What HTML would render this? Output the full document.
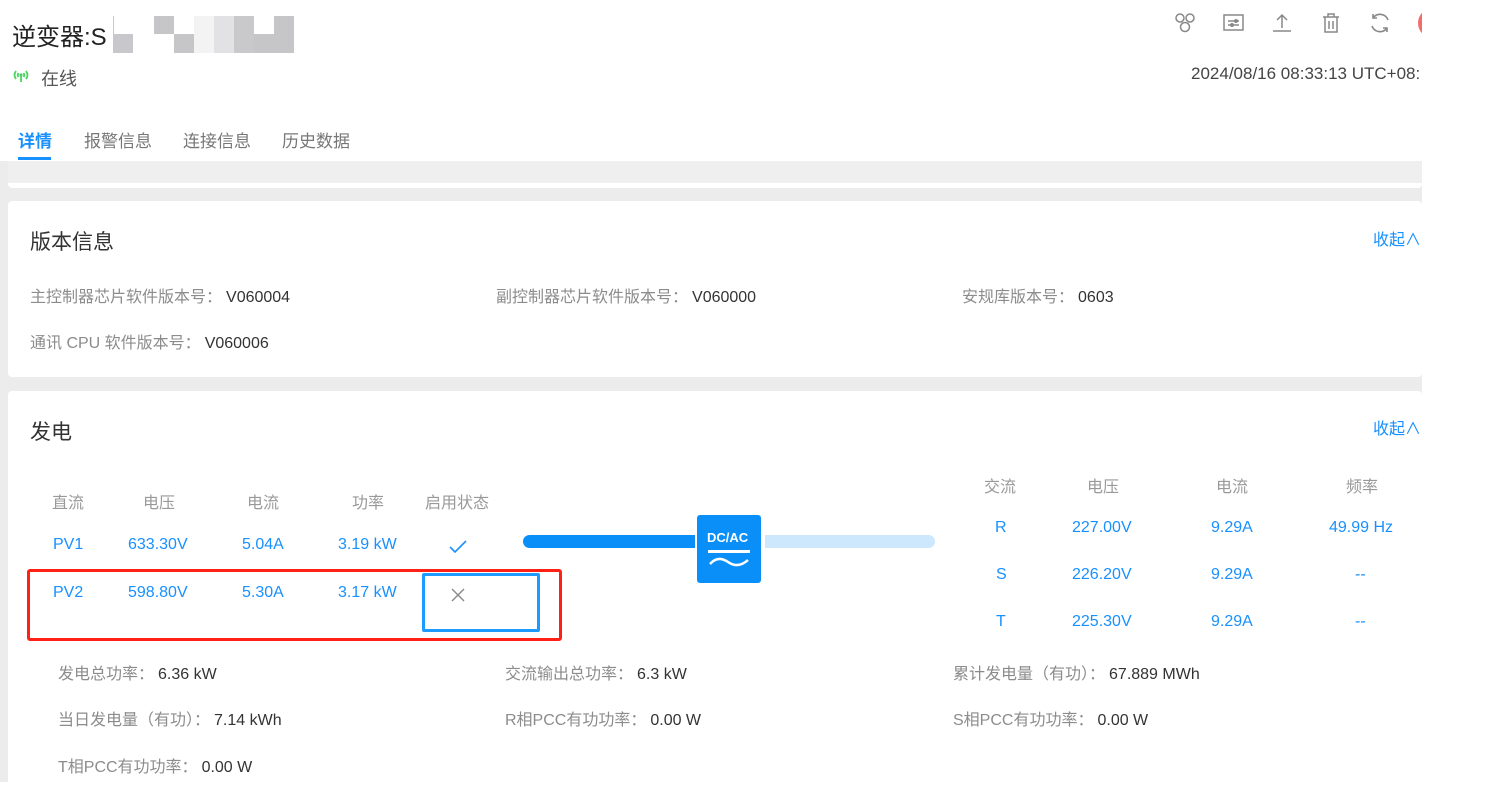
<!DOCTYPE html>
<html><head><meta charset="utf-8"><style>
*{margin:0;padding:0;box-sizing:border-box}
body{width:1487px;height:782px;overflow:hidden;background:#fff;font-family:"Liberation Sans","Noto Sans CJK SC",sans-serif;position:relative;color:#333}
.a{position:absolute;white-space:nowrap}
.lb{color:#8c8c8c;font-size:16px}
.v{color:#333;font-size:16px;margin-left:4px}
.b{color:#1890ff;font-size:16px}
.h{color:#999;font-size:16px}
</style></head><body>
<div class="a" style="left:12px;top:17px;font-size:24px;color:#222">逆变器:S</div>
<div class="a" style="left:113px;top:16px;width:20px;height:37px;background:#c8c8cc"></div>
<div class="a" style="left:114px;top:16px;width:20px;height:18px;background:#fff"></div>
<div class="a" style="left:154px;top:16px;width:20px;height:18px;background:#c6c6c9"></div>
<div class="a" style="left:174px;top:34px;width:20px;height:19px;background:#c6c6c9"></div>
<div class="a" style="left:194px;top:16px;width:20px;height:37px;background:#f3f3f3"></div>
<div class="a" style="left:214px;top:16px;width:20px;height:37px;background:#e2e2e4"></div>
<div class="a" style="left:234px;top:16px;width:20px;height:37px;background:#c9c9cc"></div>
<div class="a" style="left:254px;top:34px;width:20px;height:19px;background:#c6c6c9"></div>
<div class="a" style="left:274px;top:16px;width:20px;height:37px;background:#c6c6c9"></div>
<svg class="a" style="left:12px;top:69px" width="18" height="14" viewBox="0 0 18 14"><g fill="none" stroke="#4cd263" stroke-width="1.8"><path d="M4 2 Q1 6 4 10"/><path d="M14 2 Q17 6 14 10"/><path d="M6.5 4 Q5 6 6.5 8"/><path d="M11.5 4 Q13 6 11.5 8"/><path d="M9 6 V13"/></g><circle cx="9" cy="6" r="1.6" fill="#4cd263"/></svg>
<div class="a" style="left:41px;top:65px;font-size:18px;color:#555">在线</div>
<div class="a" style="left:1191px;top:64px;font-size:17px;color:#444">2024/08/16 08:33:13 UTC+08:</div>
<div class="a" style="left:1422px;top:0;width:65px;height:782px;background:#fff;z-index:5"></div>
<!-- icons -->
<svg class="a" style="left:1173px;top:12px" width="24" height="22" viewBox="0 0 24 22" fill="none" stroke="#888" stroke-width="1.5"><circle cx="7" cy="6" r="4"/><circle cx="17" cy="6" r="4"/><circle cx="12" cy="15" r="4.5"/></svg>
<svg class="a" style="left:1223px;top:13px" width="22" height="20" viewBox="0 0 22 20" fill="none" stroke="#888" stroke-width="1.5"><rect x="1" y="2" width="19" height="15"/><path d="M5 8h11M5 12h11"/><circle cx="13" cy="8" r="1.2"/><circle cx="9" cy="12" r="1.2"/></svg>
<svg class="a" style="left:1271px;top:12px" width="22" height="22" viewBox="0 0 22 22" fill="none" stroke="#888" stroke-width="1.5"><path d="M11 3v13M6 8l5-5 5 5M2 19h18"/></svg>
<svg class="a" style="left:1321px;top:12px" width="20" height="22" viewBox="0 0 20 22" fill="none" stroke="#888" stroke-width="1.5"><path d="M2 5h16M7 5V2h6v3M4 5v15h12V5M8 9v8M12 9v8"/></svg>
<svg class="a" style="left:1368px;top:11px" width="24" height="24" viewBox="0 0 24 24" fill="none" stroke="#888" stroke-width="1.6"><path d="M20 9A8.5 8.5 0 0 0 5 7M4 15a8.5 8.5 0 0 0 15 2"/><path d="M5 3v4h4M19 21v-4h-4"/></svg>
<div class="a" style="left:1418px;top:8px;width:30px;height:30px;border-radius:50%;background:#f56c6c;z-index:1"></div>
<!-- tabs -->
<div class="a" style="left:18px;top:127px;font-size:17px;color:#1890ff;font-weight:bold">详情</div>
<div class="a" style="left:18px;top:157px;width:33px;height:3px;background:#1890ff"></div>
<div class="a" style="left:84px;top:127px;font-size:17px;color:#777">报警信息</div>
<div class="a" style="left:183px;top:127px;font-size:17px;color:#777">连接信息</div>
<div class="a" style="left:282px;top:127px;font-size:17px;color:#777">历史数据</div>
<!-- gray area -->
<div class="a" style="left:0;top:161px;width:1422px;height:621px;background:#ececec"></div>
<div class="a" style="left:8px;top:161px;width:1414px;height:27px;background:#efefef;border-radius:0 0 4px 4px;border-bottom:5px solid #fff"></div>
<div class="a" style="left:8px;top:201px;width:1414px;height:176px;background:#fff;border-radius:4px"></div>
<div class="a" style="left:8px;top:391px;width:1414px;height:400px;background:#fff;border-radius:4px"></div>
<div class="a" style="left:30px;top:226px;font-size:21px;color:#333">版本信息</div>
<div class="a" style="left:1373px;top:226px;font-size:16px;color:#1890ff">收起∧</div>
<div class="a lb" style="left:30px;top:283px">主控制器芯片软件版本号：<span class="v">V060004</span></div>
<div class="a lb" style="left:496px;top:283px">副控制器芯片软件版本号：<span class="v">V060000</span></div>
<div class="a lb" style="left:962px;top:283px">安规库版本号：<span class="v">0603</span></div>
<div class="a lb" style="left:30px;top:329px">通讯 CPU 软件版本号：<span class="v">V060006</span></div>
<div class="a" style="left:30px;top:416px;font-size:21px;color:#333">发电</div>
<div class="a" style="left:1373px;top:415px;font-size:16px;color:#1890ff">收起∧</div>
<!-- DC table -->
<div class="a h" style="left:52px;top:489px">直流</div>
<div class="a h" style="left:143px;top:489px">电压</div>
<div class="a h" style="left:247px;top:489px">电流</div>
<div class="a h" style="left:352px;top:489px">功率</div>
<div class="a h" style="left:425px;top:489px">启用状态</div>
<div class="a b" style="left:53px;top:536px">PV1</div>
<div class="a b" style="left:128px;top:536px">633.30V</div>
<div class="a b" style="left:242px;top:536px">5.04A</div>
<div class="a b" style="left:338px;top:536px">3.19 kW</div>
<svg class="a" style="left:449px;top:540px" width="18" height="14"><path d="M1 7L6 12L17 1" fill="none" stroke="#1890ff" stroke-width="1.6"/></svg>
<div class="a b" style="left:53px;top:584px">PV2</div>
<div class="a b" style="left:128px;top:584px">598.80V</div>
<div class="a b" style="left:242px;top:584px">5.30A</div>
<div class="a b" style="left:338px;top:584px">3.17 kW</div>
<svg class="a" style="left:451px;top:588px" width="14" height="14"><path d="M1 1L13 13M13 1L1 13" stroke="#888" stroke-width="1.4"/></svg>
<div class="a" style="left:27px;top:569px;width:535px;height:72px;border:3px solid #ff2016;border-radius:3px"></div>
<div class="a" style="left:422px;top:573px;width:118px;height:59px;border:3px solid #1e9bff;border-radius:2px"></div>
<!-- converter -->
<div class="a" style="left:523px;top:535px;width:172px;height:13px;background:#0a8ff8;border-radius:7px 0 0 7px"></div>
<div class="a" style="left:765px;top:535px;width:170px;height:13px;background:#cde7fd;border-radius:0 7px 7px 0"></div>
<div class="a" style="left:697px;top:515px;width:64px;height:68px;background:#0a8ff8;border-radius:3px"></div>
<div class="a" style="left:707px;top:530px;font-size:13px;font-weight:bold;color:#fff">DC/AC</div>
<div class="a" style="left:708px;top:550px;width:42px;height:3px;background:#fff"></div>
<svg class="a" style="left:708px;top:555px" width="42" height="14"><path d="M2 9 Q10 0 20 7 T40 5" fill="none" stroke="#fff" stroke-width="2.5"/></svg>
<!-- AC table -->
<div class="a h" style="left:984px;top:473px">交流</div>
<div class="a h" style="left:1087px;top:473px">电压</div>
<div class="a h" style="left:1216px;top:473px">电流</div>
<div class="a h" style="left:1346px;top:473px">频率</div>
<div class="a b" style="left:995px;top:519px">R</div>
<div class="a b" style="left:1072px;top:519px">227.00V</div>
<div class="a b" style="left:1211px;top:519px">9.29A</div>
<div class="a b" style="left:1329px;top:519px">49.99 Hz</div>
<div class="a b" style="left:996px;top:566px">S</div>
<div class="a b" style="left:1072px;top:566px">226.20V</div>
<div class="a b" style="left:1211px;top:566px">9.29A</div>
<div class="a b" style="left:1355px;top:566px">--</div>
<div class="a b" style="left:996px;top:613px">T</div>
<div class="a b" style="left:1072px;top:613px">225.30V</div>
<div class="a b" style="left:1211px;top:613px">9.29A</div>
<div class="a b" style="left:1355px;top:613px">--</div>
<!-- summary -->
<div class="a lb" style="left:58px;top:660px">发电总功率：<span class="v">6.36 kW</span></div>
<div class="a lb" style="left:505px;top:660px">交流输出总功率：<span class="v">6.3 kW</span></div>
<div class="a lb" style="left:953px;top:660px">累计发电量（有功）：<span class="v">67.889 MWh</span></div>
<div class="a lb" style="left:58px;top:706px">当日发电量（有功）：<span class="v">7.14 kWh</span></div>
<div class="a lb" style="left:505px;top:706px">R相PCC有功功率：<span class="v">0.00 W</span></div>
<div class="a lb" style="left:953px;top:706px">S相PCC有功功率：<span class="v">0.00 W</span></div>
<div class="a lb" style="left:58px;top:753px">T相PCC有功功率：<span class="v">0.00 W</span></div>
</body></html>
